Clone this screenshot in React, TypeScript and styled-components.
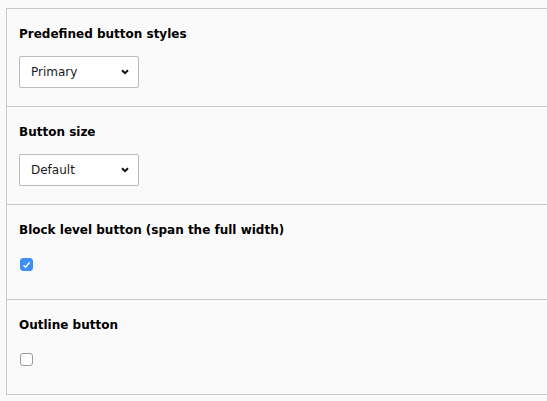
import styled, { createGlobalStyle } from 'styled-components'

const GlobalStyle = createGlobalStyle`
  html, body {
    margin: 0;
    padding: 0;
    background: #fafafa;
    overflow: hidden;
  }
  body {
    font-family: "DejaVu Sans", Verdana, sans-serif;
    color: #000;
  }
`

const Page = styled.div`
  padding: 8px 0 0 6px;
`

const Panel = styled.div`
  background: #fafafa;
  border: 1px solid #c9c9c9;
  border-right: none;
`

const Group = styled.div`
  padding: 16px 12px 18px;
  border-bottom: 1px solid #c9c9c9;

  &:last-child {
    border-bottom: none;
  }
`

const Label = styled.div`
  font-size: 12px;
  line-height: 18px;
  font-weight: bold;
  margin-bottom: 13px;
`

const SelectBox = styled.div`
  box-sizing: border-box;
  width: 120px;
  height: 32px;
  display: flex;
  align-items: center;
  justify-content: space-between;
  padding: 0 9px 0 11px;
  background: #fff;
  border: 1px solid #bbb;
  border-radius: 2px;
  font-size: 12px;
  color: #1a1a1a;
`

const CheckRow = styled.div`
  box-sizing: border-box;
  height: 29px;
  padding: 6px 0 0 1px;
`

const Box = styled.span<{ checked?: boolean }>`
  box-sizing: border-box;
  display: flex;
  align-items: center;
  justify-content: center;
  width: 13px;
  height: 13px;
  border-radius: 3px;
  background: ${({ checked }) => (checked ? '#3d8ff5' : '#fff')};
  border: 1px solid ${({ checked }) => (checked ? '#3d8ff5' : '#9a9a9a')};
`

function Chevron() {
  return (
    <svg width="8" height="6" viewBox="0 0 8 6">
      <path d="M1 1.2 L4 4.2 L7 1.2" fill="none" stroke="#111" strokeWidth="2" />
    </svg>
  )
}

function Select({ value }: { value: string }) {
  return (
    <SelectBox>
      <span>{value}</span>
      <Chevron />
    </SelectBox>
  )
}

function Checkbox({ checked }: { checked?: boolean }) {
  return (
    <CheckRow>
      <Box checked={checked}>
        {checked && (
          <svg width="9" height="8" viewBox="0 0 9 8">
            <path d="M1.5 4.2 L3.6 6.2 L7.5 1.6" fill="none" stroke="#fff" strokeWidth="1.5" />
          </svg>
        )}
      </Box>
    </CheckRow>
  )
}

export default function App() {
  return (
    <>
      <GlobalStyle />
      <Page>
        <Panel>
          <Group>
            <Label>Predefined button styles</Label>
            <Select value="Primary" />
          </Group>
          <Group>
            <Label>Button size</Label>
            <Select value="Default" />
          </Group>
          <Group>
            <Label>Block level button (span the full width)</Label>
            <Checkbox checked />
          </Group>
          <Group>
            <Label>Outline button</Label>
            <Checkbox />
          </Group>
        </Panel>
      </Page>
    </>
  )
}
